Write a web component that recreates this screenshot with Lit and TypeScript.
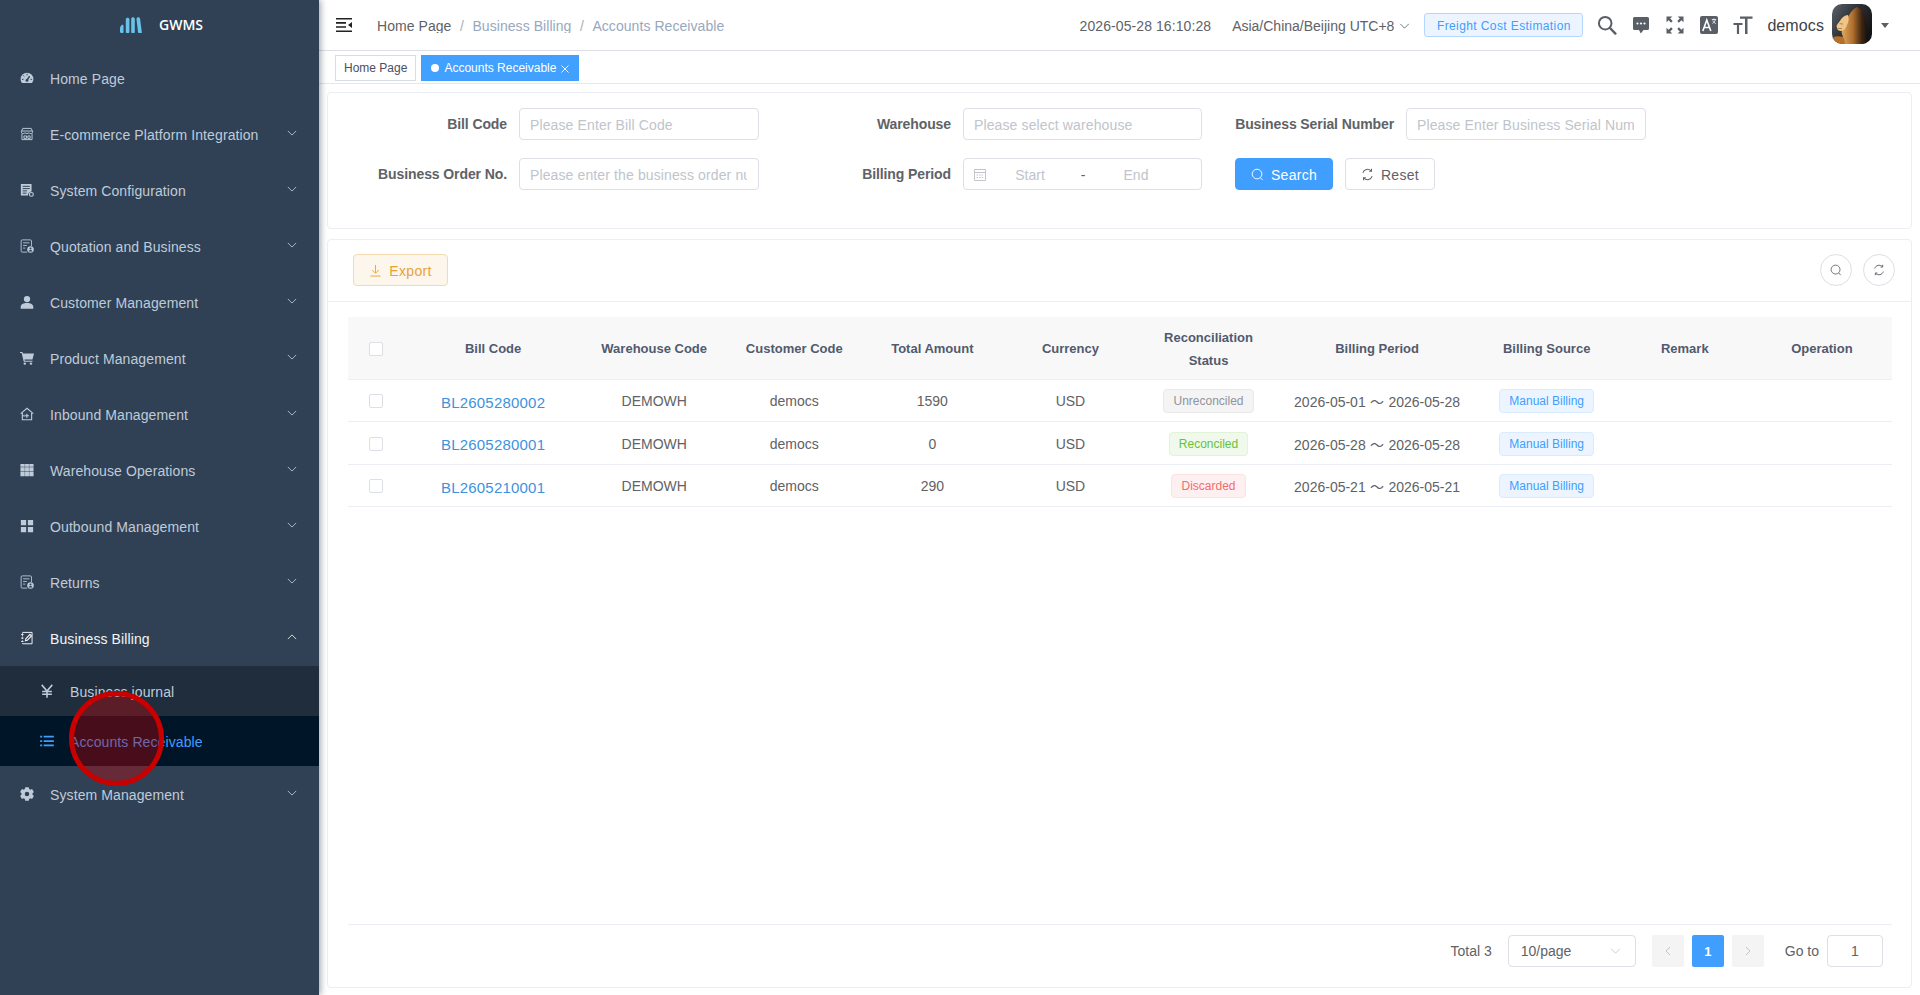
import { LitElement, html, css, svg } from "lit";
import { customElement } from "lit/decorators.js";

const s = (body: unknown, vb = "0 0 16 16") =>
  html`<svg viewBox=${vb} width="100%" height="100%" fill="none" stroke="none">${body}</svg>`;

const BG = "#304156";
const icons: Record<string, unknown> = {
  gauge: s(svg`<path fill="currentColor" d="M8 2a7.3 7.3 0 0 0-7.3 7.3c0 1.7.6 3.2 1.6 4.4h11.4a7.3 7.3 0 0 0 1.6-4.4A7.3 7.3 0 0 0 8 2z"/>
    <path stroke=${BG} stroke-width="1.1" d="M8 3.2v1.8M3.8 5.2l1.2 1.2M2.2 9.5H4M12 9.5h1.8"/><path stroke=${BG} stroke-width="1.6" d="M8 10.5l3-4.5"/><circle cx="8" cy="10.8" r="1.6" fill=${BG}/>`),
  shop: s(svg`<g stroke="currentColor" stroke-width="1.1"><path d="M3.2 1.6h9.6l1.7 3.9c0 1.2-1 2-2.2 2-.9 0-1.6-.4-2.1-1-.4.6-1.2 1-2.2 1s-1.8-.4-2.2-1c-.5.6-1.2 1-2.1 1-1.2 0-2.2-.8-2.2-2z"/><path d="M2.2 7.4v7h11.6v-7M1.8 4.6h12.4M4.5 10.2h3v2.8h-3zM9 10.2h2.6v2.8H9z"/></g>`),
  config: s(svg`<path fill="currentColor" d="M1 1h12.2v8.6a4.4 4.4 0 0 0-4 4.6H1z"/><path stroke=${BG} stroke-width="1.1" d="M3 3.8h8.2M3 6.4h8.2M3 9h5M3 11.6h4.5"/><circle cx="13" cy="13" r="2.2" stroke="currentColor" stroke-width="1.3"/>`),
  quote: s(svg`<g stroke="currentColor" stroke-width="1"><path d="M8.2 15H2.6a1.3 1.3 0 0 1-1.3-1.3V2.3A1.3 1.3 0 0 1 2.6 1h9.2a1.3 1.3 0 0 1 1.3 1.3V8"/><path d="M3.6 4.4h7.2M3.6 7.4h4.2M3.6 10.4h2.4"/></g><circle cx="12" cy="12" r="3.7" fill="currentColor"/><circle cx="12" cy="10.9" r="1.1" fill=${BG}/><path fill=${BG} d="M9.9 14.3c.2-1.1 1-1.7 2.1-1.7s1.9.6 2.1 1.7z"/>`),
  user: s(svg`<circle cx="8" cy="4.6" r="3.6" fill="currentColor"/><path fill="currentColor" d="M.8 15v-1.6C.8 10.7 4 9 8 9s7.2 1.7 7.2 4.4V15a.6.6 0 0 1-.6.6H1.4a.6.6 0 0 1-.6-.6z"/>`),
  cart: s(svg`<path fill="currentColor" d="M0 1h2.8l.6 1.8H16l-1.8 7H5.2l.3 1.2h8.8v1.300H4.300L1.900 2.400H0z"/><circle cx="5.5" cy="14.4" r="1.4" fill="currentColor"/><circle cx="12.5" cy="14.4" r="1.4" fill="currentColor"/>`),
  house: s(svg`<g stroke="currentColor" stroke-width="1.3"><path d="M.8 7.6 8 1.4l7.2 6.2"/><path d="M2.7 6.800v7.800h10.600V6.800"/></g><path stroke="currentColor" stroke-width="1.4" d="M5.3 10h5M7.8 7.600v4.800"/><path fill="currentColor" d="M5 8.200v3.600L3.400 10z"/>`),
  grid: s(svg`<path fill="currentColor" d="M.5 1h4.900v3.400H.5zM5.800 1h4.400v3.400H5.800zM10.600 1h4.900v3.400h-4.900zM.5 4.900h4.900v4.800H.5zM5.800 4.900h4.400v4.800H5.800zM10.600 4.900h4.900v4.800h-4.900zM.5 10.200h4.900V15H.5zM5.800 10.200h4.400V15H5.800zM10.600 10.200h4.900V15h-4.900z"/>`),
  apps: s(svg`<path fill="currentColor" d="M1 1h6v6H1zM9 1h6v6H9zM1 9h6v6H1zM9 9h6v6H9z"/>`),
  edit: s(svg`<g stroke="currentColor" stroke-width="1.1"><path d="M3 1.6h10.800v13H3"/><path stroke-dasharray="1.4 1.6" d="M2.8 1.8v12.800"/><path d="M1.400 4h2.600M1.400 8h2.600M1.400 12h2.600"/><path stroke-width="1.3" d="M6.200 11.200l.5-2.300 4.700-5 1.700 1.700-4.800 5z"/></g>`),
  yen: s(svg`<path stroke="currentColor" stroke-width="1.8" d="M2 1l6 7 6-7M8 8v7.600M2.400 8.500h11.200M2.400 11.800h11.200"/>`),
  list: s(svg`<path fill="currentColor" d="M.2 2h2.300v2H.2zM.2 7h2.300v2H.2zM.2 12h2.300v2H.2zM4.200 2h11.600v2H4.200zM4.200 7h11.600v2H4.200zM4.200 12h11.600v2H4.200z"/>`),
  gear: s(svg`<path fill="currentColor" fill-rule="evenodd" d="M6 .3h4l.5 2.100 1.200.7 2.100-.7 2 3.400-1.600 1.500v1.400l1.600 1.500-2 3.400-2.100-.7-1.200.7-.5 2.100H6l-.5-2.100-1.200-.7-2.100.7-2-3.400 1.600-1.500V7.300L.2 5.800l2-3.400 2.100.7 1.200-.7zM8 5.400a2.600 2.600 0 1 0 0 5.200 2.600 2.600 0 0 0 0-5.200z"/>`),
};

const chevron = (up = false) => html`<svg class="chev" viewBox="0 0 12 7" width="10" height="6" fill="none" stroke="currentColor" stroke-width="1">
  <path d=${up ? "M1 6l5-5 5 5" : "M1 1l5 5 5-5"}/></svg>`;
const searchLine = html`<svg class="gl" viewBox="0 0 14 14" fill="none" stroke="currentColor" stroke-width="1"><circle cx="6.5" cy="6.5" r="5.2"/><path d="M10.200 10.400l2.300 2.600"/></svg>`;
const refresh = html`<svg class="gl" viewBox="0 0 14 14" fill="none" stroke="currentColor" stroke-width="1.1"><path d="M2 5.200a5.300 5.300 0 0 1 8.800-2.200M12 8.800a5.300 5.300 0 0 1-8.800 2.200"/><path d="M11.300 .9v2.600H8.800M2.700 13.100v-2.600h2.500"/></svg>`;

const menu: { icon: string; label: string; arrow?: boolean }[] = [
  { icon: "gauge", label: "Home Page" },
  { icon: "shop", label: "E-commerce Platform Integration", arrow: true },
  { icon: "config", label: "System Configuration", arrow: true },
  { icon: "quote", label: "Quotation and Business", arrow: true },
  { icon: "user", label: "Customer Management", arrow: true },
  { icon: "cart", label: "Product Management", arrow: true },
  { icon: "house", label: "Inbound Management", arrow: true },
  { icon: "grid", label: "Warehouse Operations", arrow: true },
  { icon: "apps", label: "Outbound Management", arrow: true },
  { icon: "quote", label: "Returns", arrow: true },
];

const rows = [
  { code: "BL2605280002", amount: "1590", status: "Unreconciled", cls: "gray", period: "2026-05-01 ～ 2026-05-28" },
  { code: "BL2605280001", amount: "0", status: "Reconciled", cls: "green", period: "2026-05-28 ～ 2026-05-28" },
  { code: "BL2605210001", amount: "290", status: "Discarded", cls: "red", period: "2026-05-21 ～ 2026-05-21" },
];
const colWidths = [56, 178, 144, 136, 140, 136, 140, 197, 142, 134, 140];

@customElement("app-root")
export class AppRoot extends LitElement {
  static styles = css`
    :host { display: flex; width: 100%; height: 995px; overflow: hidden; background: #fff; color: #606266;
      font: 14px "Liberation Sans", Arial, sans-serif; position: relative; }
    * { box-sizing: border-box; }
    .side { width: 319px; flex: none; background: #304156; color: #bfcbd9; box-shadow: 2px 0 6px rgba(0,21,41,.35); z-index: 2; }
    .logo { height: 50px; display: flex; align-items: center; padding: 0 0 1px 120px; gap: 17px; color: #fff; font: 600 14px "Open Sans", sans-serif; }
    .item { height: 56px; display: flex; align-items: center; padding: 1px 22px 0 20px; }
    .item .ic, .sub .ic { width: 14px; height: 14px; flex: none; margin-right: 16px; margin-top: -2px; }
    .item .tx { flex: 1; letter-spacing: .1px; }
    .chev { flex: none; margin-top: -3px; }
    .item.open { color: #f4f4f5; }
    .sub { height: 50px; display: flex; align-items: center; padding: 1px 0 0 40px; background: #1f2d3d; letter-spacing: .1px; }
    .sub.active { background: #001528; color: #409eff; }
    .ring { position: absolute; left: 69px; top: 691px; width: 95px; height: 95px; border-radius: 50%; border: 5px solid #c80000; background: rgba(204,0,0,.35); z-index: 3; }

    .main { flex: 1; min-width: 0; display: flex; flex-direction: column; }
    .head { height: 51px; flex: none; border-bottom: 1px solid #dcdfe4; display: flex; align-items: center; padding: 0 31px 0 17px; }
    .fold { width: 16px; height: 14px; color: #222; margin-right: 25px; }
    .crumb { display: flex; align-items: center; color: #97a8be; height: 15px; overflow: hidden; line-height: 16px; margin-top: 1px; letter-spacing: .06px; }
    .crumb b { font-weight: 400; color: #606266; }
    .crumb i { font-style: normal; color: #a8b0bb; margin: 0 8.5px; }
    .tools { margin-left: auto; display: flex; align-items: center; }
    .date { padding-top: 1px; letter-spacing: .08px; }
    .tz { display: flex; align-items: center; gap: 5px; margin-left: 21px; padding-top: 1px; }
    .tz .chev { margin: 0; width: 11px; }
    .est { margin-left: 14px; width: 159px; height: 24px; border: 1px solid #b3d8ff; background: #ecf5ff; color: #409eff; border-radius: 3px; font-size: 12px; letter-spacing: .4px; display: flex; align-items: center; justify-content: center; padding-top: 1px; white-space: nowrap; }
    .hi { width: 20px; height: 20px; color: #5a5e66; flex: none; margin-left: 14px; }
    .hi.search { margin-left: 14px; }
    .hi.chat { margin-left: 14px; }
    .hi.full { margin-left: 14px; }
    .who { font-size: 16px; color: #404246; margin-left: 14px; padding-top: 2px; letter-spacing: .1px; }
    .avatar { width: 40px; height: 40px; border-radius: 10px; margin-left: 8px; margin-top: -2px; overflow: hidden; flex: none; }
    .caret { width: 0; height: 0; border: 4px solid transparent; border-top: 5px solid #5a5e66; border-bottom: 0; margin-left: 9px; }

    .tags { height: 33px; flex: none; border-bottom: 1px solid #e4e7ed; display: flex; align-items: center; padding: 2px 0 0 16px; gap: 5px; font-size: 12px; }
    .tag { height: 26px; display: flex; align-items: center; padding: 0 8px; border: 1px solid #d8dce5; color: #495060; }
    .tag.on { background: #42a0ff; border-color: #42a0ff; color: #fff; padding: 0 9px; }
    .tag .dot { width: 8px; height: 8px; border-radius: 50%; background: #fff; margin-right: 5px; }
    .tag .x { width: 8px; height: 8px; margin-left: 5px; margin-top: 2px; }

    .card { border: 1px solid #ebeef5; border-radius: 4px; background: #fff; margin: 0 8px; }
    .filter { height: 137px; margin-top: 8px; flex: none; padding-top: 15px; display: grid; grid-template-columns: 191px 240px 204px 239px 204px 240px; grid-auto-rows: 32px; row-gap: 18px; align-items: center; }
    .lbl { font-weight: 700; text-align: right; padding-right: 12px; color: #606266; letter-spacing: -.1px; }
    .inp { width: 100%; height: 32px; border: 1px solid #dcdfe6; border-radius: 4px; padding: 1px 11px 0 10px; font: inherit; letter-spacing: .12px; outline: none; color: #606266; background: #fff; }
    .inp::placeholder { color: #c0c4cc; opacity: 1; }
    .range { height: 32px; border: 1px solid #dcdfe6; border-radius: 4px; display: flex; align-items: center; padding: 1px 0 0 9px; color: #c0c4cc; }
    .range svg { flex: none; }
    .range span { width: 86px; text-align: center; }
    .range .dash { width: 20px; color: #606266; }
    .btns { grid-column: 5 / 7; display: flex; gap: 12px; padding-left: 33px; }
    .btn { height: 32px; border-radius: 4px; border: 1px solid #dcdfe6; background: #fff; color: #606266; display: flex; align-items: center; justify-content: center; gap: 7px; padding: 1px 0 0; font: inherit; letter-spacing: .3px; }
    .btn.pri { background: #409eff; border-color: #409eff; color: #fff; width: 98px; }
    .btn.plain { width: 90px; }
    .btn.warn { background: #fdf6ec; border-color: #f5dab1; color: #e6a23c; width: 95px; }
    .gl { width: 13px; height: 13px; flex: none; }

    .tablecard { flex: 1; margin-top: 10px; margin-bottom: 7px; display: flex; flex-direction: column; min-height: 0; }
    .tb { height: 62px; flex: none; border-bottom: 1px solid #ebeef5; display: flex; align-items: center; justify-content: space-between; padding: 0 16px 1px 25px; }
    .rnd { display: flex; gap: 11px; }
    .rnd span { width: 32px; height: 32px; border: 1px solid #dcdfe6; border-radius: 50%; display: grid; place-items: center; color: #606266; }
    .rnd .gl { width: 12px; height: 12px; }
    .wrap { flex: 1; margin: 15px 19px 0 20px; border-bottom: 1px solid #ebeef5; min-height: 0; }
    table { border-collapse: collapse; table-layout: fixed; width: 100%; text-align: center; }
    th { height: 62px; background: #f8f8f9; color: #515a6e; font-size: 13px; font-weight: 700; line-height: 23px; padding: 2px 10px 0; border-bottom: 1px solid #ebeef5; }
    td { height: 42px; padding: 2px 0 0; border-bottom: 1px solid #ebeef5; white-space: nowrap; }
    tr:nth-child(2) td { height: 43px; }
    td.code { padding-top: 4px; }
    .cb { display: block; width: 14px; height: 14px; border: 1px solid #dcdfe6; border-radius: 2px; margin: 0 auto; background: #fff; }
    .link { color: #3d92e0; font-size: 15px; letter-spacing: .2px; }
    .st { display: inline-flex; align-items: center; height: 24px; padding: 0 9px; border: 1px solid; border-radius: 4px; font-size: 12px; vertical-align: middle; }
    .gray { background: #f4f4f5; border-color: #e9e9eb; color: #909399; }
    .green { background: #f0f9eb; border-color: #e1f3d8; color: #67c23a; }
    .red { background: #fef0f0; border-color: #fde2e2; color: #f56c6c; }
    .blue { background: #ecf5ff; border-color: #d9ecff; color: #409eff; }
    .wide { font-family: "Liberation Sans", "Noto Sans CJK SC", sans-serif; word-spacing: .5px; }

    .pager { height: 62px; flex: none; display: flex; align-items: flex-start; justify-content: flex-end; padding: 10px 28px 0 0; }
    .total { margin-right: 16px; line-height: 32px; }
    .psel { width: 128px; height: 32px; border: 1px solid #dcdfe6; border-radius: 4px; display: flex; align-items: center; justify-content: space-between; padding: 0 14px 0 12px; margin-right: 16px; }
    .psel .chev { color: #c0c4cc; margin: 0; width: 11px; }
    .pg { width: 32px; height: 32px; border-radius: 2px; background: #f4f4f5; color: #c0c4cc; display: grid; place-items: center; margin-right: 8px; }
    .pg.last { margin-right: 0; }
    .pg.cur { background: #409eff; color: #fff; font-weight: 700; font-size: 13px; }
    .pg svg { width: 6px; height: 10px; }
    .goto { margin-left: 21px; line-height: 32px; margin-right: 8px; }
    .gi { width: 56px; height: 32px; border: 1px solid #dcdfe6; border-radius: 4px; display: grid; place-items: center; }
  `;

  private field(label: string, ph: string) {
    return html`<label class="lbl">${label}</label><input class="inp" placeholder=${ph} />`;
  }

  render() {
    const manual = html`<span class="st blue">Manual Billing</span>`;
    return html`
      <aside class="side">
        <div class="logo">
          <svg viewBox="0 0 22 16" width="22" height="16"><g fill="#68c3ea"><path d="M0 11.5c0-1 .6-2.500 1.500-3.300.9-.8 2-.2 2 1V15c0 .8-.5 1-1 1h-1C.6 16 0 15.400 0 14.500z"/><path d="M5.800 2.500c0-2.500 3.600-2.500 3.600 0V15c0 .8-.5 1-1 1H6.800c-.5 0-1-.2-1-1z"/><path d="M11.200 2c0-2.500 3.600-2.500 3.600 0v13c0 .8-.5 1-1 1h-1.600c-.5 0-1-.2-1-1z"/><path d="M16.500 2.300c0-2.500 3.300-2.600 3.600-.3l1.700 13c.1.800-.4 1-1 1h-1.700c-.6 0-1-.2-1.100-1z"/></g></svg>
          <span>GWMS</span>
        </div>
        ${menu.map((m) => html`<div class="item"><span class="ic">${icons[m.icon]}</span><span class="tx">${m.label}</span>${m.arrow ? chevron() : ""}</div>`)}
        <div class="item open"><span class="ic">${icons.edit}</span><span class="tx">Business Billing</span>${chevron(true)}</div>
        <div class="sub"><span class="ic">${icons.yen}</span><span>Business journal</span></div>
        <div class="sub active"><span class="ic">${icons.list}</span><span>Accounts Receivable</span></div>
        <div class="item"><span class="ic">${icons.gear}</span><span class="tx">System Management</span>${chevron()}</div>
      </aside>
      <div class="ring"></div>

      <div class="main">
        <header class="head">
          <span class="fold">${s(svg`<path fill="currentColor" d="M0 0h16v1.600H0zM0 4.100h10v1.600H0zM0 8.200h10v1.600H0zM0 12.400h16V14H0zM16 4v6l-4-3z"/>`, "0 0 16 14")}</span>
          <nav class="crumb"><b>Home Page</b><i>/</i><span>Business Billing</span><i>/</i><span>Accounts Receivable</span></nav>
          <div class="tools">
            <span class="date">2026-05-28 16:10:28</span>
            <span class="tz">Asia/China/Beijing UTC+8 ${chevron()}</span>
            <span class="est">Freight Cost Estimation</span>
            <span class="hi search">${s(svg`<circle cx="8.2" cy="8.2" r="6.3" stroke="currentColor" stroke-width="2"/><path stroke="currentColor" stroke-width="2.4" stroke-linecap="round" d="M13 13l5.400 5.600"/>`, "0 0 20 20")}</span>
            <span class="hi chat">${s(svg`<path fill="currentColor" d="M3.500 2h13A1.500 1.500 0 0 1 18 3.500v10a1.500 1.500 0 0 1-1.500 1.500h-4L9.800 18.500 8 15H3.500A1.500 1.500 0 0 1 2 13.500v-10A1.500 1.500 0 0 1 3.500 2z"/><g fill="#fff"><circle cx="6.5" cy="8.5" r="1.1"/><circle cx="10" cy="8.5" r="1.1"/><circle cx="13.5" cy="8.5" r="1.1"/></g>`, "0 0 20 20")}</span>
            <span class="hi full">${s(svg`<g fill="currentColor"><path d="M1.500 1.500h5.800L5.200 3.600l2.500 2.500L6.100 7.700 3.600 5.200 1.500 7.300zM18.500 1.500v5.800l-2.100-2.100-2.500 2.500-1.600-1.600 2.500-2.500-2.100-2.100zM1.500 18.500v-5.800l2.100 2.100 2.500-2.500 1.600 1.600-2.500 2.500 2.100 2.100zM18.500 18.500h-5.800l2.100-2.100-2.500-2.500 1.600-1.600 2.500 2.500 2.100-2.100z"/></g>`, "0 0 20 20")}</span>
            <span class="hi">${s(svg`<rect x="1" y="1" width="18" height="18" rx="2" fill="currentColor"/><path stroke="#fff" stroke-width="1.6" d="M3.800 16L7.800 5l4 11M5.200 12.500h5.300"/><path stroke="#fff" stroke-width=".8" d="M12.800 4.500h4.400M15 3.500v1M13.500 8.500c1.500-1 2.500-2.300 2.800-4M13.800 5.500c.5 1.300 1.600 2.300 3 3"/>`, "0 0 20 20")}</span>
            <span class="hi">${s(svg`<path fill="currentColor" d="M7 1.500h12.500v2.300h-5V19h-2.500V3.800H7zM.5 8h9v2H6.100v9H3.900v-9H.5z"/>`, "0 0 20 20")}</span>
            <span class="who">democs</span>
            <span class="avatar">
              <svg viewBox="0 0 40 40" width="40" height="40"><defs>
                <linearGradient id="sky" x1="0" y1="0" x2="1" y2=".6"><stop offset="0" stop-color="#5a636b"/><stop offset=".55" stop-color="#2b2d31"/><stop offset="1" stop-color="#141416"/></linearGradient>
                <linearGradient id="mane" x1="0" y1="0" x2="1" y2="0"><stop offset="0" stop-color="#e0a860"/><stop offset=".45" stop-color="#b06e2c"/><stop offset=".8" stop-color="#3e2612"/><stop offset="1" stop-color="#1c130c"/></linearGradient></defs>
                <rect width="40" height="40" fill="url(#sky)"/>
                <path fill="url(#mane)" d="M25 3c5 2 8 7 9 14 1 7 1 16 0 23H12c0-4-1-7-2-10-1-2 0-4 1-6 1-3 2-7 5-11 2-4 5-8 9-10z"/>
                <path fill="#efc488" d="M5 21c1-2 3-4 5-7 2-2 4-3 6-3 1 3 1 7-1 10-1 3-3 6-6 6-2 0-4-1-4-3 0-1-1-2 0-3z"/>
                <path fill="#7a4a20" opacity=".55" d="M7 19l4 .5-1 1.500zM5 24h5v1H6z"/>
                <path fill="#b5702c" d="M0 34c3-2 7-2 11-1 1 2 2 4 2 7H0z"/>
              </svg>
            </span>
            <span class="caret"></span>
          </div>
        </header>

        <div class="tags">
          <span class="tag">Home Page</span>
          <span class="tag on"><span class="dot"></span>Accounts Receivable<svg class="x" viewBox="0 0 8 8" stroke="#fff" stroke-width=".9"><path d="M.5.5l7 7M7.500.5l-7 7"/></svg></span>
        </div>

        <section class="card filter">
          ${this.field("Bill Code", "Please Enter Bill Code")}
          ${this.field("Warehouse", "Please select warehouse")}
          ${this.field("Business Serial Number", "Please Enter Business Serial Number")}
          ${this.field("Business Order No.", "Please enter the business order number")}
          <label class="lbl">Billing Period</label>
          <div class="range">
            <svg viewBox="0 0 14 14" width="14" height="14" fill="none" stroke="#c0c4cc" stroke-width="1"><path d="M1.500 1.500h11v11h-11zM1.500 4.500h11"/><path stroke-dasharray="1.500 1" d="M3.500 7h7M3.500 9.500h7"/></svg>
            <span>Start</span><span class="dash">-</span><span>End</span>
          </div>
          <div class="btns">
            <button class="btn pri">${searchLine}Search</button>
            <button class="btn plain">${refresh}Reset</button>
          </div>
        </section>

        <section class="card tablecard">
          <div class="tb">
            <button class="btn warn"><svg class="gl" viewBox="0 0 14 14" fill="none" stroke="currentColor" stroke-width="1"><path d="M7 1v8.500M3.500 6.500L7 10l3.500-3.500M1.500 13h11"/></svg>Export</button>
            <div class="rnd"><span>${searchLine}</span><span>${refresh}</span></div>
          </div>
          <div class="wrap">
            <table>
              <colgroup>${colWidths.map((w) => html`<col style="width:${w}px" />`)}</colgroup>
              <thead><tr>
                <th><span class="cb"></span></th><th>Bill Code</th><th>Warehouse Code</th><th>Customer Code</th><th>Total Amount</th><th>Currency</th>
                <th>Reconciliation Status</th><th>Billing Period</th><th>Billing Source</th><th>Remark</th><th>Operation</th>
              </tr></thead>
              <tbody>
                ${rows.map((r) => html`<tr>
                  <td><span class="cb"></span></td>
                  <td class="code"><span class="link">${r.code}</span></td>
                  <td>DEMOWH</td><td>democs</td><td>${r.amount}</td><td>USD</td>
                  <td><span class="st ${r.cls}">${r.status}</span></td>
                  <td class="wide">${r.period}</td>
                  <td>${manual}</td><td></td><td></td>
                </tr>`)}
              </tbody>
            </table>
          </div>
          <div class="pager">
            <span class="total">Total 3</span>
            <span class="psel">10/page ${chevron()}</span>
            <span class="pg"><svg viewBox="0 0 6 10" fill="none" stroke="currentColor"><path d="M5 1L1 5l4 4"/></svg></span>
            <span class="pg cur">1</span>
            <span class="pg last"><svg viewBox="0 0 6 10" fill="none" stroke="currentColor"><path d="M1 1l4 4-4 4"/></svg></span>
            <span class="goto">Go to</span>
            <span class="gi">1</span>
          </div>
        </section>
      </div>
    `;
  }
}
